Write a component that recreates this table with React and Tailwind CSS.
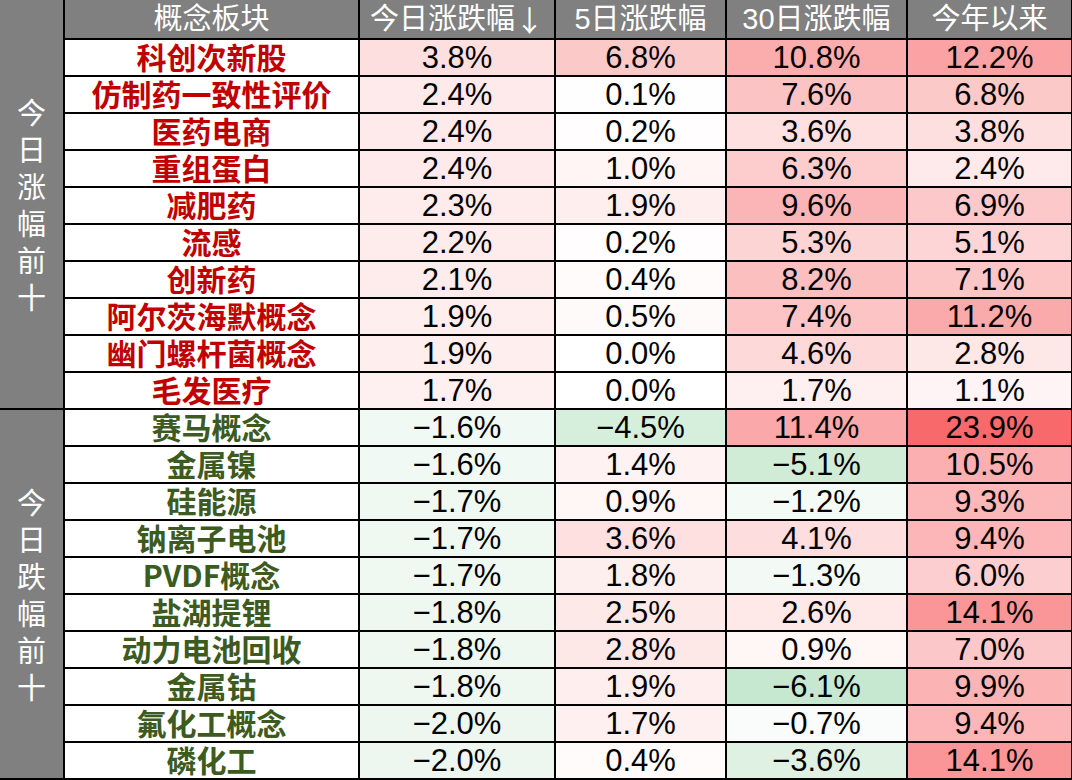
import React from 'react'

const up = [
	['科创次新股', 3.8, 6.8, 10.8, 12.2],
	['仿制药一致性评价', 2.4, 0.1, 7.6, 6.8],
	['医药电商', 2.4, 0.2, 3.6, 3.8],
	['重组蛋白', 2.4, 1.0, 6.3, 2.4],
	['减肥药', 2.3, 1.9, 9.6, 6.9],
	['流感', 2.2, 0.2, 5.3, 5.1],
	['创新药', 2.1, 0.4, 8.2, 7.1],
	['阿尔茨海默概念', 1.9, 0.5, 7.4, 11.2],
	['幽门螺杆菌概念', 1.9, 0.0, 4.6, 2.8],
	['毛发医疗', 1.7, 0.0, 1.7, 1.1],
]

const down = [
	['赛马概念', -1.6, -4.5, 11.4, 23.9],
	['金属镍', -1.6, 1.4, -5.1, 10.5],
	['硅能源', -1.7, 0.9, -1.2, 9.3],
	['钠离子电池', -1.7, 3.6, 4.1, 9.4],
	['PVDF概念', -1.7, 1.8, -1.3, 6.0],
	['盐湖提锂', -1.8, 2.5, 2.6, 14.1],
	['动力电池回收', -1.8, 2.8, 0.9, 7.0],
	['金属钴', -1.8, 1.9, -6.1, 9.9],
	['氟化工概念', -2.0, 1.7, -0.7, 9.4],
	['磷化工', -2.0, 0.4, -3.6, 14.1],
]

// excel style colour scale: white at 0, red up, green down
function cellColor(v) {
	if (v >= 0) {
		const t = Math.min(1, Math.pow(v / 21, 0.9))
		return `rgb(${Math.round(255 - t * 7)},${Math.round(255 - t * 150)},${Math.round(255 - t * 148)})`
	}
	const t = Math.min(1, -v / 17)
	return `rgb(${Math.round(255 - t * 156)},${Math.round(255 - t * 65)},${Math.round(255 - t * 132)})`
}

const fmt = (v) => (v < 0 ? '\u2212' + Math.abs(v).toFixed(1) : v.toFixed(1)) + '%'

function Side({ text }) {
	return (
		<div className="bg-[#808080] flex flex-col items-center justify-center gap-[8px] text-white text-[29px] leading-[29px] font-['Noto_Sans_CJK_SC',sans-serif]">
			{text.split('').map((c, i) => (
				<span key={i}>{c}</span>
			))}
		</div>
	)
}

function Rows({ data, nameColor }) {
	return data.map((r) => (
		<React.Fragment key={r[0]}>
			<div className={`bg-white flex items-center justify-center pb-[3px] font-bold text-[30px] leading-[30px] font-['Noto_Sans_CJK_SC',sans-serif] ${nameColor}`}>
				{r[0]}
			</div>
			{r.slice(1).map((v, i) => (
				<div
					key={i}
					className="flex items-center justify-center text-[31px] leading-none text-black font-['Liberation_Sans','Noto_Sans_CJK_SC',sans-serif]"
					style={{ backgroundColor: cellColor(v) }}
				>
					{fmt(v)}
				</div>
			))}
		</React.Fragment>
	))
}

const headCls = "bg-[#808080] flex items-center justify-center text-white text-[29px] leading-[29px] font-['Liberation_Sans','Noto_Sans_CJK_SC',sans-serif]"

export default function App() {
	return (
		<div className="w-[1072px] h-[780px] bg-black pr-px pb-[2px] overflow-hidden">
			<div className="grid grid-cols-[63px_293px_194px_169px_179px_163px] grid-rows-[38px_repeat(20,35px)] gap-[2px]">
				<div className="row-span-11 grid">
					<Side text="今日涨幅前十" />
				</div>
				<div className={headCls}>概念板块</div>
				<div className={headCls}>
					今日涨跌幅<span className="font-['Noto_Sans_CJK_SC',sans-serif]">↓</span>
				</div>
				<div className={headCls}>5日涨跌幅</div>
				<div className={headCls}>30日涨跌幅</div>
				<div className={headCls}>今年以来</div>
				<Rows data={up} nameColor="text-[#c00000]" />
				<div className="row-span-10 grid">
					<Side text="今日跌幅前十" />
				</div>
				<Rows data={down} nameColor="text-[#3d5a1f]" />
			</div>
		</div>
	)
}
